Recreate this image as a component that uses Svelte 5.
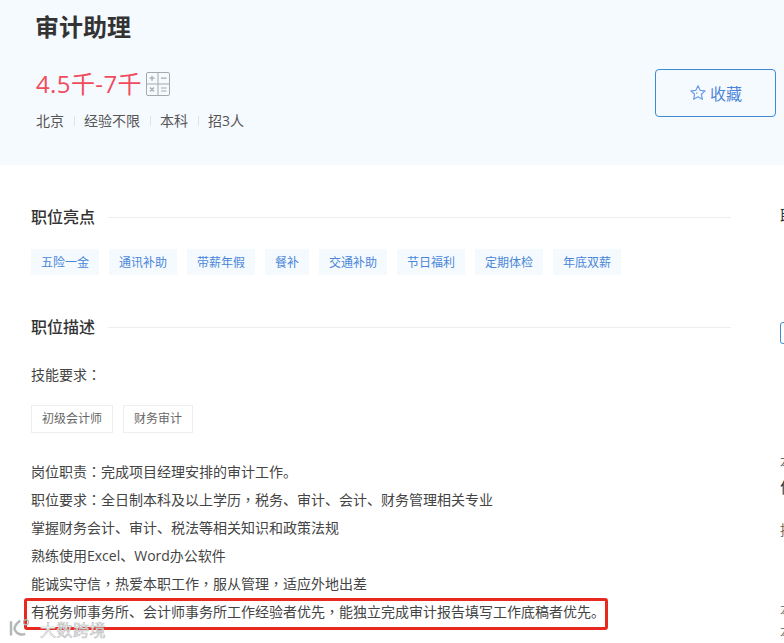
<script>
  const meta = ['北京', '经验不限', '本科', '招3人'];
  const perks = ['五险一金', '通讯补助', '带薪年假', '餐补', '交通补助', '节日福利', '定期体检', '年底双薪'];
  const skills = ['初级会计师', '财务审计'];
  const lines = [
    '岗位职责：完成项目经理安排的审计工作。',
    '职位要求：全日制本科及以上学历，税务、审计、会计、财务管理相关专业',
    '掌握财务会计、审计、税法等相关知识和政策法规',
    '熟练使用Excel、Word办公软件',
    '能诚实守信，热爱本职工作，服从管理，适应外地出差'
  ];
  const marked = '有税务师事务所、会计师事务所工作经验者优先，能独立完成审计报告填写工作底稿者优先。';

  // colon and comma sit centred in the cell, the TC cut draws them that way
  function parts(s) {
    return s.split(/([：，])/).filter(Boolean);
  }
</script>

<div class="page">
  <header class="hero">
    <div class="hero-main">
      <h1>审计助理</h1>
      <div class="salary">
        <span>4.5千-7千</span>
        <svg class="calc" width="24" height="24" viewBox="0 0 24 24" fill="none" stroke="#a5a9ad" aria-hidden="true">
          <rect x="0.5" y="0.5" width="23" height="23" rx="1.5" />
          <path d="M12 0.5V23.5M0.5 12H23.5" />
          <path d="M3.5 6.2H8.5M6 3.7V8.7M15 6.2H20.5" stroke-width="1.2" />
          <path d="M4 15.5L8 19.5M8 15.5L4 19.5M15 16H20.5M15 19H20.5" stroke-width="1.2" />
        </svg>
      </div>
      <ul class="meta">
        {#each meta as item}
          <li>{item}</li>
        {/each}
      </ul>
    </div>
    <button class="fav">
      <svg width="18" height="18" viewBox="0 0 18 18" fill="none" stroke="#6d9be8" stroke-width="1.2" stroke-linejoin="round" aria-hidden="true">
        <path d="M9 1.8L11.1 6.3L16.1 6.9L12.4 10.3L13.4 15.3L9 12.8L4.6 15.3L5.6 10.3L1.9 6.9L6.9 6.3Z" />
        <path d="M8 8.2L7.6 10" stroke-width="1" />
      </svg>
      收藏
    </button>
  </header>

  <div class="body">
    <main class="content">
      <section class="block">
        <div class="block-title"><h2>职位亮点</h2></div>
        <div class="perks">
          {#each perks as perk}
            <span class="perk">{perk}</span>
          {/each}
        </div>
      </section>

      <section class="block desc">
        <div class="block-title"><h2>职位描述</h2></div>
        <p class="skills-label">技能要求<span class="punct">：</span></p>
        <div class="skills">
          {#each skills as skill}
            <span class="skill">{skill}</span>
          {/each}
        </div>
        <div class="text">
          {#each lines as line}
            <p>
              {#each parts(line) as part}
                {#if part === '：' || part === '，'}<span class="punct">{part}</span>{:else}{part}{/if}
              {/each}
            </p>
          {/each}
          <p class="marked">
            {#each parts(marked) as part}
              {#if part === '，'}<span class="punct">{part}</span>{:else}{part}{/if}
            {/each}
          </p>
        </div>
      </section>
    </main>

    <aside class="side">
      <div class="side-title">职位发布者</div>
      <div class="side-btn"></div>
      <div class="side-a">本公司</div>
      <div class="side-b">优质企业</div>
      <div class="side-c">招聘</div>
      <div class="side-d">本科</div>
      <div class="side-e">本地</div>
    </aside>
  </div>

  <div class="mark">
    <svg width="26" height="20" viewBox="0 0 30 24" fill="none" stroke="#b4b8b8" stroke-width="3" aria-hidden="true">
      <path d="M3 4V21M14 3C8 8 6 12 8 15C10 19 15 21 20 19" />
      <circle cx="21" cy="5" r="3" stroke-width="1.5" />
    </svg>
    <span>大数跨境</span>
  </div>
</div>

<style>
  :global(body) {
    background: #fff;
  }

  .page {
    position: relative;
    width: 784px;
    height: 643px;
    overflow: hidden;
    background: #fff;
    color: #333;
    font-family: "Open Sans", "Noto Sans CJK SC", sans-serif;
  }

  .hero {
    display: flex;
    justify-content: space-between;
    height: 165px;
    box-sizing: border-box;
    padding: 0 8px 0 35px;
    background: #f5faff;
  }

  .hero-main h1 {
    margin: 10px 0 0;
    font-size: 24px;
    line-height: 34px;
    font-weight: 700;
    color: #333;
  }

  .salary {
    display: flex;
    align-items: center;
    gap: 4px;
    margin-top: 22px;
    padding-left: 1px;
    height: 34px;
    font-size: 24px;
    letter-spacing: 0.4px;
    color: #f04c5c;
  }

  .salary span {
    margin-top: -2px;
  }

  .calc {
    display: block;
    margin-top: 2px;
  }

  .meta {
    display: flex;
    margin: 11px 0 0 1px;
    padding: 0;
    list-style: none;
    font-size: 14px;
    line-height: 20px;
    color: #555;
  }

  .meta li {
    position: relative;
    padding-right: 20px;
  }

  .meta li:not(:last-child)::after {
    content: "";
    position: absolute;
    right: 9.5px;
    top: 5px;
    width: 1px;
    height: 10px;
    background: #dfe3e6;
  }

  .fav {
    display: flex;
    align-items: center;
    justify-content: center;
    gap: 3px;
    width: 121px;
    height: 48px;
    margin-top: 69px;
    padding: 0;
    box-sizing: border-box;
    border: 1px solid #3d8bd4;
    border-radius: 4px;
    background: transparent;
    color: #4f84d8;
    font-family: inherit;
    font-size: 16px;
  }

  .body {
    display: flex;
    padding-left: 31px;
  }

  .content {
    flex: none;
    width: 700px;
    padding-top: 40px;
  }

  .block-title {
    display: flex;
    align-items: center;
    height: 24px;
  }

  .block-title h2 {
    margin: 0;
    padding-bottom: 2px;
    font-size: 16px;
    font-weight: 500;
    color: #333;
  }

  .block-title::after {
    content: "";
    flex: 1;
    height: 1px;
    margin-left: 13px;
    background: #eeeeee;
  }

  .perks {
    display: flex;
    gap: 10px;
    margin-top: 20px;
  }

  .perk {
    height: 26px;
    padding: 0 10px;
    font-size: 12px;
    line-height: 27px;
    color: #4a86d8;
    background: #f5faff;
  }

  .desc {
    margin-top: 40px;
  }

  .skills-label {
    margin: 24px 0 0;
    font-size: 14px;
    line-height: 24px;
    color: #444;
  }

  .punct {
    font-family: "Noto Sans CJK TC", sans-serif;
    line-height: 0;
  }

  .skills {
    display: flex;
    gap: 10px;
    margin-top: 18px;
  }

  .skill {
    height: 26px;
    padding: 0 10px;
    border: 1px solid #eee;
    font-size: 12px;
    line-height: 26px;
    color: #666;
  }

  .text {
    margin-top: 25px;
    font-size: 14px;
    line-height: 28px;
    color: #444;
  }

  .text p {
    margin: 0;
    height: 28px;
  }

  .marked {
    position: relative;
  }

  .marked::before {
    content: "";
    position: absolute;
    left: -7px;
    top: 0;
    width: 578px;
    height: 26px;
    border: 3px solid #e8291f;
    border-radius: 3px;
  }

  .side {
    position: relative;
    flex: none;
    width: 100px;
    margin-left: 49px;
    font-size: 14px;
  }

  .side > div {
    position: absolute;
    left: 0;
    white-space: nowrap;
    line-height: 20px;
  }

  .side-title {
    top: 41px;
    font-size: 16px;
    color: #333;
  }

  .side-btn {
    top: 157px;
    width: 60px;
    height: 20px;
    border: 1px solid #3d8bd4;
    border-radius: 3px;
  }

  .side-a {
    top: 287px;
    color: #666;
  }

  .side-b {
    top: 312px;
    font-size: 16px;
    color: #333;
  }

  .side-c {
    top: 355px;
    color: #8a6a50;
  }

  .side-d {
    top: 435px;
    color: #777;
  }

  .side-e {
    top: 457px;
    color: #777;
  }

  .mark {
    position: absolute;
    left: 8px;
    top: 618px;
    display: flex;
    align-items: flex-start;
    gap: 6px;
    color: #fff;
    font-size: 16px;
    line-height: 24px;
  }

  .mark span {
    -webkit-text-stroke: 0.6px #b9bcbc;
    letter-spacing: 0.5px;
  }
</style>
